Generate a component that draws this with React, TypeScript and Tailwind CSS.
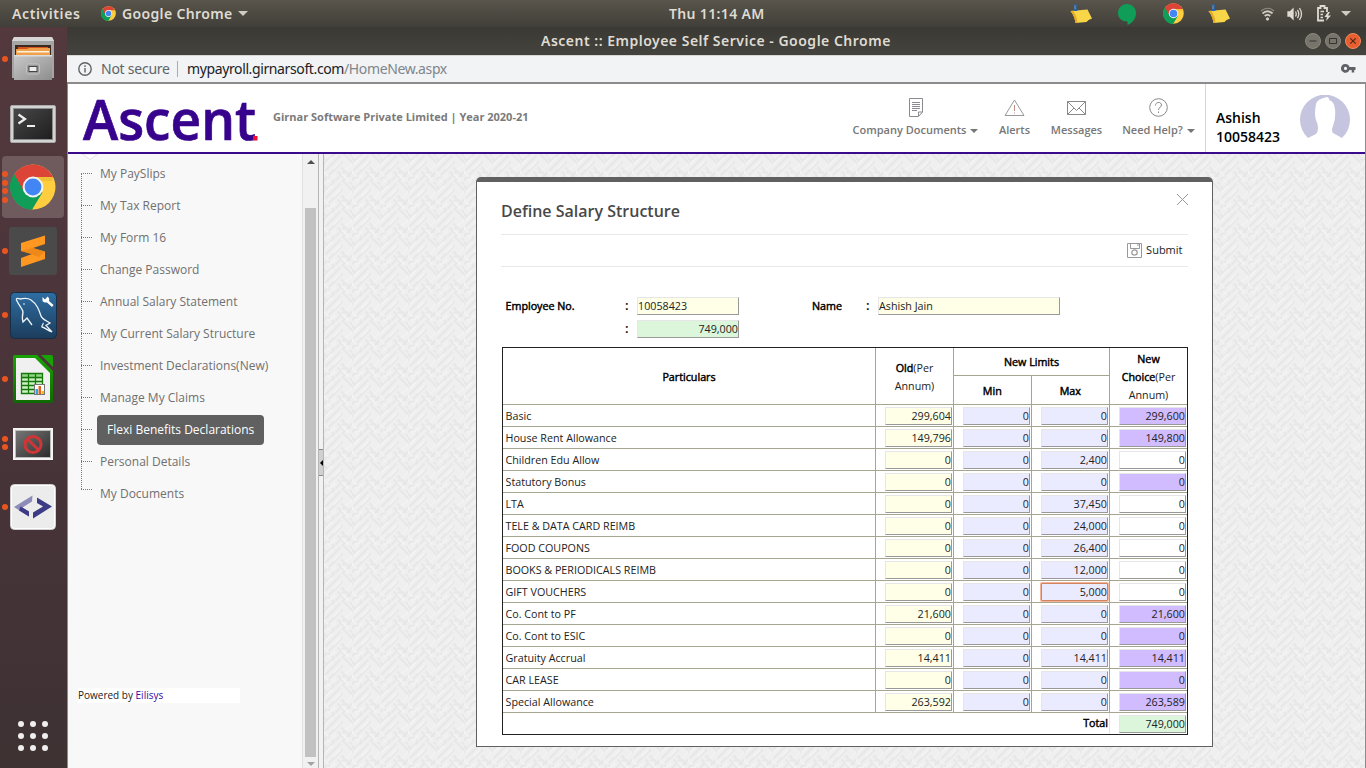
import React from "react";

const rows: [string, string, string, string, boolean][] = [
  ["Basic", "299,604", "0", "299,600", true],
  ["House Rent Allowance", "149,796", "0", "149,800", true],
  ["Children Edu Allow", "0", "2,400", "0", false],
  ["Statutory Bonus", "0", "0", "0", true],
  ["LTA", "0", "37,450", "0", false],
  ["TELE & DATA CARD REIMB", "0", "24,000", "0", false],
  ["FOOD COUPONS", "0", "26,400", "0", false],
  ["BOOKS & PERIODICALS REIMB", "0", "12,000", "0", false],
  ["GIFT VOUCHERS", "0", "5,000", "0", false],
  ["Co. Cont to PF", "21,600", "0", "21,600", true],
  ["Co. Cont to ESIC", "0", "0", "0", true],
  ["Gratuity Accrual", "14,411", "14,411", "14,411", true],
  ["CAR LEASE", "0", "0", "0", true],
  ["Special Allowance", "263,592", "0", "263,589", true],
];

const menu = [
  "My PaySlips",
  "My Tax Report",
  "My Form 16",
  "Change Password",
  "Annual Salary Statement",
  "My Current Salary Structure",
  "Investment Declarations(New)",
  "Manage My Claims",
  "Flexi Benefits Declarations",
  "Personal Details",
  "My Documents",
];

function Chrome({ size }: { size: number }) {
  return (
    <svg width={size} height={size} viewBox="0 0 46 46" className="shrink-0">
      <circle cx="23" cy="23" r="22.5" fill="#ffcd40" />
      <path d="M23 23 L4.2 10.5 A22.5 22.5 0 0 0 22 45.5 L32.5 28.5 Z" fill="#0f9d58" />
      <path d="M4.2 10.5 A22.5 22.5 0 0 1 43 13 L23 13 L13.5 27 Z" fill="#db4437" />
      <path d="M4.2 10.5 L13.4 27 A10.5 10.5 0 0 0 23 33.5 L31 29 L22 45.5 A22.5 22.5 0 0 1 4.2 10.5Z" fill="#0f9d58" />
      <path d="M23 13H43L42 17L30 17Z" fill="#e8b62f" opacity=".6" />
      <circle cx="23" cy="23" r="10.4" fill="#f4f4f4" />
      <circle cx="23" cy="23" r="8.4" fill="#4285f4" />
    </svg>
  );
}

function Note() {
  return (
    <svg width="22" height="20" viewBox="0 0 22 20">
      <path d="M0.500 7L17.500 5.500L22 14.500Q18 15.500 16.500 18L5.500 19Q4.500 12 0.500 7Z" fill="#f9d548" />
      <path d="M0.500 7Q4.500 12 5.500 19L7.500 18.800Q7 12 3 6.800Z" fill="#e5ab22" />
      <path d="M4 0.500H7L6.500 4L7.500 7H3.500L4.500 4Z" fill="#2a63a8" />
      <path d="M5 1.500V5" stroke="#7fb0e0" strokeWidth=".8" />
    </svg>
  );
}

function FilesIcon() {
  return (
    <svg width="44" height="46" viewBox="0 0 44 46">
      <defs>
        <linearGradient id="cab" x1="0" y1="0" x2="1" y2="1">
          <stop offset="0" stopColor="#c9c9c9" />
          <stop offset="1" stopColor="#8d8d8d" />
        </linearGradient>
      </defs>
      <path d="M3 1H41L43 5V42H1V5Z" fill="#a5a5a5" />
      <path d="M3 1H41L43 5H1Z" fill="#d6d6d6" />
      <rect x="4" y="9" width="36" height="12" fill="#3b2a20" />
      <path d="M7 11H37V20H7Z" fill="#d5541e" />
      <path d="M5 13H16L18 12H39V21H5Z" fill="#f0a04a" />
      <path d="M6 15H38V16.500H6Z" fill="#fff3e0" />
      <rect x="3" y="19" width="38" height="25" fill="url(#cab)" />
      <path d="M3 19H41V20.500H3Z" fill="#dcdcdc" />
      <rect x="15.500" y="28" width="13" height="10" rx="2" fill="#9b9b9b" stroke="#c4c4c4" />
      <rect x="18" y="30.500" width="8" height="5" fill="#eee" stroke="#444" />
    </svg>
  );
}

function TerminalIcon() {
  return (
    <svg width="46" height="38" viewBox="0 0 46 38">
      <defs>
        <linearGradient id="term" x1="0" y1="0" x2="1" y2="1">
          <stop offset="0" stopColor="#484848" />
          <stop offset="1" stopColor="#1e1e1e" />
        </linearGradient>
      </defs>
      <rect x=".5" y=".5" width="45" height="37" rx="1.500" fill="#d3d3d3" stroke="#aaa" />
      <rect x="3.500" y="3.500" width="39" height="31" fill="url(#term)" stroke="#8b8b8b" />
      <path d="M8.500 9.500L15 14L8.500 18.500" fill="none" stroke="#eee" strokeWidth="2.200" />
      <path d="M17 21H25" stroke="#eee" strokeWidth="2" />
    </svg>
  );
}

function SublimeIcon() {
  return (
    <svg width="48" height="48" viewBox="0 0 48 48">
      <rect width="48" height="48" rx="3" fill="#4a4a4a" />
      <path d="M12 16L36 8.500V17L24 21L36 24.500V32L12 40V31L23 27L12 24Z" fill="#ff9720" />
      <path d="M36 24.500L24 21L12 24L30 30Z" fill="#e37f14" opacity=".6" />
    </svg>
  );
}

function DolphinIcon() {
  return (
    <svg width="47" height="47" viewBox="0 0 47 47">
      <defs>
        <linearGradient id="sea" x1="0" y1="0" x2="0" y2="1">
          <stop offset="0" stopColor="#2f6da3" />
          <stop offset="1" stopColor="#1c3d5c" />
        </linearGradient>
      </defs>
      <rect x=".5" y=".5" width="46" height="46" rx="4" fill="url(#sea)" stroke="#172e44" />
      <path
        d="M6.500 8C6 6 8 6 10 7C15 6 18 6 21 8C27 12 29 18 31 24C32 27 35 28 40 31L36 33.500L42 40C37 38 34 35 32 35C31 34 34 32 33 31M6.500 8C9 14 13 17 13 20C12 25 12 27 13 30L17 26L22 33"
        fill="none"
        stroke="#eef6fb"
        strokeWidth="1.300"
      />
      <circle cx="14" cy="12" r=".8" fill="#fff" />
      <path d="M32.500 5L35 7.500L37.500 4.500Q40 6.500 39 9L43.500 13L42 15L37 10.500Q34 11 32.500 9Z" fill="#fff" />
    </svg>
  );
}

function CalcIcon() {
  return (
    <svg width="40" height="48" viewBox="0 0 40 48">
      <defs>
        <linearGradient id="lo" x1="0" y1="0" x2="0" y2="1">
          <stop offset="0" stopColor="#18a303" />
          <stop offset="1" stopColor="#106802" />
        </linearGradient>
      </defs>
      <path d="M2 0H24L40 16V46Q40 48 38 48H2Q0 48 0 46V2Q0 0 2 0Z" fill="url(#lo)" />
      <path d="M28 0H38Q40 0 40 2V12Z" fill="#18a303" />
      <path d="M3 3H22L37 18V45H3Z" fill="#f0f0f0" />
      <rect x="8.500" y="18.500" width="21" height="20" fill="#cdf0c4" />
      <rect x="8.500" y="18.500" width="21" height="5" fill="#8fd682" />
      <path d="M8.500 18.500H29.500V38.500H8.500ZM8.500 22.500H29.500M8.500 26.500H29.500M8.500 30.500H29.500M8.500 34.500H29.500M15.500 18V39M22.500 18V39" fill="none" stroke="#16780a" strokeWidth="1.300" />
      <rect x="21.500" y="29.500" width="10" height="10" fill="#fff" stroke="#777" />
      <path d="M22.500 39V34H25V39Z" fill="#3b9fd8" />
      <path d="M25.500 39V31H28V39Z" fill="#e0631e" />
      <path d="M28.500 39V36H31V39Z" fill="#f0bd1a" />
    </svg>
  );
}

function BlockedIcon() {
  return (
    <svg width="40" height="32" viewBox="0 0 40 32">
      <defs>
        <linearGradient id="blk" x1="0" y1="0" x2="1" y2="1">
          <stop offset="0" stopColor="#777" />
          <stop offset="1" stopColor="#2b2b2b" />
        </linearGradient>
      </defs>
      <rect width="40" height="32" fill="#f4f4f4" />
      <rect x="2.500" y="2.500" width="35" height="27" fill="url(#blk)" stroke="#bbb" />
      <circle cx="20" cy="16.500" r="8" fill="none" stroke="#cf3638" strokeWidth="3" />
      <path d="M14.500 11L25.500 22" stroke="#cf3638" strokeWidth="3" />
    </svg>
  );
}

function CodeIcon() {
  return (
    <svg width="46" height="46" viewBox="0 0 46 46">
      <rect x=".5" y=".5" width="45" height="45" rx="4" fill="#fff" stroke="#cfcfcf" />
      <rect x="2" y="2" width="42" height="42" rx="3" fill="#ececec" />
      <path d="M22.500 11.500L4 23L19 32.500V27.500L12.500 23.500L22 17.500Z" fill="#8d8bb8" />
      <path d="M10.500 22.500L19 27.500V32.500L9 26.500Z" fill="#3d3b85" />
      <path d="M27 13.500L42 22.500L23 34.500V28.500L33 22.500L27 19Z" fill="#3d3b85" />
    </svg>
  );
}

const dock: { icon: React.ReactNode; dots: number; active?: boolean }[] = [
  { icon: <FilesIcon />, dots: 1 },
  { icon: <div className="pt-[2px]"><TerminalIcon /></div>, dots: 0 },
  { icon: <Chrome size={46} />, dots: 4, active: true },
  { icon: <SublimeIcon />, dots: 1 },
  { icon: <DolphinIcon />, dots: 1 },
  { icon: <CalcIcon />, dots: 1 },
  { icon: <div className="pt-[2px]"><BlockedIcon /></div>, dots: 2 },
  { icon: <CodeIcon />, dots: 1 },
];

function Dock() {
  return (
    <aside className="flex w-[67px] shrink-0 flex-col bg-linear-to-b from-[#53393d] via-[#49343a] to-[#3e3233]">
      {dock.map((d, i) => (
        <div key={i} className="flex h-[64px] items-center">
          <div className="flex w-[10px] shrink-0 flex-col items-center gap-[2.500px]">
            {Array.from({ length: d.dots }, (_, k) => (
              <span key={k} className="relative z-10 size-[6px] rounded-full bg-[#e95420]" />
            ))}
          </div>
          <div
            className={
              d.active
                ? "-ml-[8px] flex size-[62px] items-center justify-center rounded-[4px] bg-[#6f5a5e]"
                : "-ml-[8px] flex size-[62px] items-center justify-center"
            }
          >
            {d.icon}
          </div>
        </div>
      ))}
      <div className="mt-auto mb-[17px] ml-[18px] grid w-[30px] grid-cols-3 gap-[6px]">
        {Array.from({ length: 9 }, (_, k) => (
          <span key={k} className="size-[6px] rounded-full bg-[#f0eeee]" />
        ))}
      </div>
    </aside>
  );
}

function TopBar() {
  return (
    <header className="grid h-[27px] shrink-0 grid-cols-[669px_1fr] items-center bg-linear-to-b from-[#59554c] to-[#413f39] font-['Noto_Sans'] text-[14px] leading-[27px] font-semibold text-[#dfdbd2]">
      <div className="flex items-center">
        <span className="w-[88px] pl-[12px] tracking-[0.600px]">Activities</span>
        <span className="w-[13px]" />
        <Chrome size={15} />
        <span className="ml-[6px] tracking-[0.350px]">Google Chrome</span>
        <svg width="10" height="5" viewBox="0 0 10 5" className="ml-[6px]"><path d="M0 0H10L5 5Z" fill="#cfccc4" /></svg>
      </div>
      <div className="flex items-center">
        <span className="w-[401px] tracking-[0.350px]">Thu 11:14 AM</span>
        <Note />
        <svg width="20" height="22" viewBox="0 0 20 22" className="ml-[25px]">
          <path d="M10 1C15 1 19 5 19 10C19 16 15 20 10.500 22V18.500C5 18.500 1 15 1 10C1 5 5 1 10 1Z" fill="#0f9d58" />
        </svg>
        <span className="ml-[26px]"><Chrome size={21} /></span>
        <span className="ml-[24px]"><Note /></span>
        <svg width="15" height="14" viewBox="0 0 15 14" className="ml-[30px]" fill="none" stroke="#cfccc4">
          <path d="M1 4Q7.500 -1.500 14 4" strokeWidth="1.200" opacity=".5" />
          <path d="M2.500 6.500Q7.500 2 12.500 6.500M4.700 9Q7.500 6.500 10.300 9" strokeWidth="1.800" />
          <circle cx="7.500" cy="12" r="1.200" fill="#cfccc4" />
        </svg>
        <svg width="16" height="14" viewBox="0 0 16 14" className="ml-[12px]" fill="none" stroke="#dfdbd2" strokeWidth="1.300">
          <path d="M1 5H3L6 2V12L3 9H1Z" fill="#dfdbd2" />
          <path d="M8.500 4.500Q10 7 8.500 9.500M10.500 2.800Q13 7 10.500 11.200M12.500 1Q16.500 7 12.500 13" />
        </svg>
        <svg width="16" height="17" viewBox="0 0 16 17" className="ml-[13px]" fill="none" stroke="#dfdbd2" strokeWidth="1.800">
          <path d="M11 7V3H8.500V1H4.500V3H2V15.500H8" />
          <path d="M4.500 6.500H8M4.500 9.500H7M4.500 12.500H7" strokeWidth="1.300" />
          <path d="M12 7L8.500 12H11L10 16L15 10.500H12L14 7Z" fill="#dfdbd2" stroke="none" />
        </svg>
        <svg width="10" height="5" viewBox="0 0 10 5" className="ml-[9px]"><path d="M0 0H10L5 5Z" fill="#cfccc4" /></svg>
      </div>
    </header>
  );
}

function TitleBar() {
  return (
    <div className="grid h-[28px] shrink-0 grid-cols-[474px_1fr_auto] items-center bg-linear-to-b from-[#3b3934] to-[#45433d] font-['Noto_Sans'] text-[14px] font-semibold text-[#dfdbd2]">
      <span />
      <span className="pb-[2px] tracking-[0.500px] whitespace-nowrap">Ascent :: Employee Self Service - Google Chrome</span>
      <div className="mr-[5px] flex gap-[4px]">
        <svg width="16" height="16"><circle cx="8" cy="8" r="7.500" fill="#77746c" stroke="#8b887f" /><path d="M4.500 8H11.500" stroke="#35332f" /></svg>
        <svg width="16" height="16"><circle cx="8" cy="8" r="7.500" fill="#77746c" stroke="#8b887f" /><path d="M4.500 5.500H11.500V10.500H4.500Z" fill="none" stroke="#35332f" /></svg>
        <svg width="16" height="16"><circle cx="8" cy="8" r="7.500" fill="#e85e2f" stroke="#f08a5e" /><path d="M5.300 5.300L10.700 10.700M10.700 5.300L5.300 10.700" stroke="#4a2a1c" strokeWidth="1.200" /></svg>
      </div>
    </div>
  );
}

function UrlBar() {
  return (
    <div className="flex h-[29px] shrink-0 items-center border-t border-b-2 border-t-[#d9d8d6] border-b-[#8c8c8c] bg-[#f1f3f4] pb-px font-['Noto_Sans'] text-[14px] text-[#5f6368]">
      <svg width="14" height="14" viewBox="0 0 14 14" className="ml-[11px]" fill="none" stroke="#5f6368" strokeWidth="1.400">
        <circle cx="7" cy="7" r="6.200" /><path d="M7 6V10.500M7 3.300V5" />
      </svg>
      <span className="ml-[9px] w-[76px] tracking-[-0.250px]">Not secure</span>
      <span className="mr-[9px] h-[16px] w-px bg-[#a8abb0]" />
      <span className="tracking-[-0.380px] text-[#202124]">mypayroll.girnarsoft.com<span className="text-[#80868b]">/HomeNew.aspx</span></span>
      <svg width="15" height="9" viewBox="0 0 15 9" className="mr-[10px] ml-auto" fill="#5f6368">
        <path fillRule="evenodd" d="M4.500 0A4.400 4.400 0 0 1 8.500 3H14.500V6H13.200V8.500H10.700V6H8.500A4.400 4.400 0 1 1 4.500 0ZM4.500 2.800A1.600 1.600 0 1 0 4.500 6A1.600 1.600 0 1 0 4.500 2.800Z" />
      </svg>
    </div>
  );
}

const navText = "text-[11px] leading-[16px] font-semibold text-[#777777] whitespace-nowrap";

function Caret() {
  return <svg width="8" height="4" viewBox="0 0 8 4" className="ml-[4px] inline-block align-middle"><path d="M0 0H8L4 4Z" fill="#777" /></svg>;
}

function AppHeader() {
  return (
    <div className="flex h-[70px] shrink-0 border-b-2 border-[#3a0a8c] bg-white">
      <svg width="178" height="66" viewBox="0 0 178 66" className="ml-[14px] shrink-0 overflow-visible">
        <text x="1" y="56" fontFamily="Open Sans" fontWeight="600" fontSize="56" fill="#38038c" stroke="#38038c" strokeWidth=".7" textLength="173" lengthAdjust="spacingAndGlyphs">Ascent</text>
        <rect x="171" y="52" width="4.500" height="4.500" fill="#ee1133" />
      </svg>
      <div className="ml-[13px] pt-[25px] text-[11px] leading-[16px] font-bold whitespace-nowrap text-[#7a7a7a]">Girnar Software Private Limited | Year 2020-21</div>
      <div className="ml-auto flex items-start pt-[14px]">
        <div className="mr-[21px] flex w-[125px] flex-col items-center">
          <svg width="16" height="19" viewBox="0 0 16 19" fill="none" stroke="#8a8a90"><path d="M1.500 .5H14.500V14L10.500 18.500H1.500ZM10.500 18V14H14.500M4 4.500H12M4 6.500H12M4 8.500H12M4 10.500H12M4 12.500H9" /></svg>
          <span className={navText + " mt-[5px]"}>Company Documents<Caret /></span>
        </div>
        <div className="mr-[21px] flex w-[31px] flex-col items-center">
          <svg width="21" height="19" viewBox="0 0 21 19" fill="none" stroke="#999"><path d="M10.500 2L20 17.500H1Z" /><path d="M10.500 7V13M10.500 14.500V15.500" stroke="#c08a80" /></svg>
          <span className={navText + " mt-[5px]"}>Alerts</span>
        </div>
        <div className="mr-[20px] flex w-[51px] flex-col items-center">
          <svg width="19" height="19" viewBox="0 0 19 19" fill="none" stroke="#888"><path d="M.5 3.500H18.500V16.500H.5ZM.5 3.500L9.500 12.500L18.500 3.500M.5 16.500L7 10M18.500 16.500L12 10" /></svg>
          <span className={navText + " mt-[5px]"}>Messages</span>
        </div>
        <div className="mr-[10px] flex w-[73px] flex-col items-center">
          <svg width="19" height="19" viewBox="0 0 19 19" fill="none" stroke="#888"><circle cx="9.500" cy="9.500" r="8.800" /><path d="M6.500 7.500C6.500 3.500 12.500 3.500 12.500 7C12.500 9.500 9.500 9 9.500 12M9.500 13.500V15" /></svg>
          <span className={navText + " mt-[5px]"}>Need Help?<Caret /></span>
        </div>
      </div>
      <div className="flex w-[160px] shrink-0 border-l border-[#d6d6d6] pl-[10px]">
        <div className="w-[84px] pt-[24px] text-[14px] leading-[19px] font-semibold text-black">
          <div>Ashish</div>
          <div>10058423</div>
        </div>
        <svg width="50" height="44" viewBox="0 0 50 44" className="mt-[11px]">
          <path d="M8 43A25 25 0 1 1 42 43L33 38Q31 35 33 31Q36 24 35 14Q34 6 29 5Q30 3 27 2Q17 4 16 9Q14 20 16 25Q18 29 18 33Q18 37 16 39Z" fill="#c5c5df" />
        </svg>
      </div>
    </div>
  );
}

function Sidebar() {
  return (
    <div className="flex w-[256px] shrink-0 bg-[#f8f8f8]">
      <div className="flex w-[234px] flex-col">
        <svg width="16" height="6" viewBox="0 0 16 6" className="ml-[14px]"><path d="M0 0L8 5.500L16 0Z" fill="#fff" stroke="#e2e2e2" /></svg>
        <ul className="-mt-[2px]">
          {menu.map((m, i) => (
            <li key={m} className="flex h-[32px] items-start">
              <div className="mt-[15px] ml-[13px] flex h-[32px] w-[12px] shrink-0">
                <div
                  className={
                    i === 10
                      ? "-mt-[4px] h-px w-[11px] border-t border-dotted border-[#777]"
                      : i === 9
                        ? "h-[28px] w-[11px] border-t border-l border-dotted border-[#777]"
                        : "h-[32px] w-[11px] border-t border-l border-dotted border-[#777]"
                  }
                />
              </div>
              {i === 8 ? (
                <span className="mt-[1px] ml-[4px] h-[30px] w-[167px] shrink-0 rounded-[4px] bg-[#606060] pl-[10px] text-[12px] leading-[30px] whitespace-nowrap text-white">{m}</span>
              ) : (
                <span className="ml-[7px] text-[12px] leading-[32px] whitespace-nowrap text-[#707070]">{m}</span>
              )}
            </li>
          ))}
        </ul>
        <div className="mt-auto mb-[65px] ml-[10px] h-[15px] w-[162px] bg-white text-[10px] leading-[15px] text-[#222]">
          Powered by <span className="text-[#3a0a9c]">Eilisys</span>
        </div>
      </div>
      <div className="flex w-[16px] flex-col items-center border-l border-[#e0e0e0] bg-[#f1f1f1]">
        <svg width="8" height="4" viewBox="0 0 8 4" className="mt-[6px] shrink-0"><path d="M0 4H8L4 0Z" fill="#505050" /></svg>
        <div className="mt-[44px] w-[11px] flex-1 bg-[#c1c1c1]" />
        <svg width="8" height="4" viewBox="0 0 8 4" className="mt-[5px] mb-[2px] shrink-0"><path d="M0 0H8L4 4Z" fill="#a3a3a3" /></svg>
      </div>
      <div className="flex w-[6px] flex-col border-x border-[#b5b5b5] bg-[#f2f2f2]">
        <div className="mt-[295px] flex h-[27px] items-center justify-end border-y border-[#888] bg-[#d0d0d0]">
          <svg width="3" height="6" viewBox="0 0 3 6"><path d="M3 0V6L0 3Z" fill="#000" /></svg>
        </div>
      </div>
    </div>
  );
}

const fieldBase = "h-[18px] border border-t-[#e6e6e6] border-l-[#e6e6e6] border-r-[#999] border-b-[#999] leading-[16px] text-[#222]";

function Field({ value, tone, focus }: { value: string; tone: string; focus?: boolean }) {
  return (
    <div className="pt-[2px] pl-[9px]">
      <div
        className={
          focus
            ? "h-[18px] w-[67px] rounded-[1px] border border-[#cf8360] text-right leading-[16px] text-[#222] shadow-[0_0_0_1px_#f5b597] " + tone
            : fieldBase + " w-[67px] text-right " + tone
        }
      >
        {value}
      </div>
    </div>
  );
}

const line = "border-[#a5a590]";
const faux = "text-black [-webkit-text-stroke:0.450px_black]";

function SalaryTable() {
  return (
    <div className="ml-[1px] w-[686px] border border-[#222] text-[10.720px]">
      <div className={"grid h-[57px] grid-cols-[373px_78px_156px_77px] border-b " + line}>
        <div className={"flex items-center justify-center border-r pt-[2px] " + line + " " + faux}>Particulars</div>
        <div className={"flex items-center justify-center border-r pt-[2px] text-center leading-[18px] text-[#222] " + line}>
          <div><span className={faux}>Old</span>(Per<br />Annum)</div>
        </div>
        <div className={"grid grid-cols-2 grid-rows-[28px_28px] border-r text-center leading-[28px] " + line + " " + faux}>
          <div className={"col-span-2 border-b " + line}>New Limits</div>
          <div className={"border-r leading-[30px] " + line}>Min</div>
          <div className="leading-[30px]">Max</div>
        </div>
        <div className="flex items-center justify-center pt-[2px] text-center leading-[18px] text-[#222]">
          <div><span className={faux}>New<br />Choice</span>(Per<br />Annum)</div>
        </div>
      </div>
      {rows.map(([name, old, max, choice, locked], i) => (
        <div key={name} className={"grid h-[22px] grid-cols-[373px_78px_78px_78px_77px] border-b " + line}>
          <div className={"border-r pl-[2.500px] leading-[22px] text-[#222] " + line}>{name}</div>
          <div className={"border-r " + line}><Field value={old} tone="bg-[#feffe6]" /></div>
          <div className={"border-r " + line}><Field value="0" tone="bg-[#ebebff]" /></div>
          <div className={"border-r " + line}><Field value={max} tone="bg-[#ebebff]" focus={i === 8} /></div>
          <Field value={choice} tone={locked ? "bg-[#d0bcff]" : "bg-white"} />
        </div>
      ))}
      <div className="grid h-[21px] grid-cols-[607px_77px]">
        <div className={"border-r border-[#e6e6e6] pr-px text-right leading-[20px] " + faux}>Total</div>
        <Field value="749,000" tone="bg-[#dbf6da]" />
      </div>
    </div>
  );
}

function Card() {
  return (
    <section className="mt-[23px] ml-[152px] h-[570px] w-[737px] rounded-t-[5px] border border-t-[5px] border-[#606060] bg-white px-[24px]">
      <div className="flex h-[53px] justify-between border-b border-[#e8e8e8]">
        <h1 className="pt-[17px] text-[16px] leading-[24px] font-semibold text-[#484848]">Define Salary Structure</h1>
        <svg width="13" height="13" viewBox="0 0 13 13" className="mt-[11px] -mr-px"><path d="M1 1L12 12M12 1L1 12" stroke="#999" /></svg>
      </div>
      <div className="flex h-[32px] items-center justify-end border-b border-[#e8e8e8] pr-[5.500px] text-[11px] text-[#222]">
        <svg width="15" height="15" viewBox="0 0 15 15" className="mr-[4px]" fill="none" stroke="#999"><path d="M.5 .5H14.500V14.500H.5ZM3.500 .5V5.500H12.500V.5M11 1V3" /><circle cx="7.500" cy="9.500" r="2.700" strokeWidth="1.200" /></svg>
        Submit
      </div>
      <div className="mt-[30px] flex h-[18px] items-center pl-[4px] text-[10.720px]">
        <span className={"w-[120px] pl-[0.500px] " + faux}>Employee No.</span>
        <span className="w-[12px] text-[13px] font-semibold text-black">:</span>
        <span className={fieldBase + " w-[102px] bg-[#feffe6]"}>10058423</span>
        <span className={"ml-[73px] w-[54px] " + faux}>Name</span>
        <span className="w-[12px] text-[13px] font-semibold text-black">:</span>
        <span className={fieldBase + " w-[182px] bg-[#feffe6]"}>Ashish Jain</span>
      </div>
      <div className="mt-[5px] mb-[9px] flex h-[18px] items-center pl-[124px] text-[10.720px]">
        <span className="w-[12px] text-[13px] font-semibold text-black">:</span>
        <span className={fieldBase + " w-[102px] bg-[#dbf6da] text-right"}>749,000</span>
      </div>
      <SalaryTable />
    </section>
  );
}

function Weave() {
  return (
    <svg className="absolute inset-0 h-full w-full">
      <defs>
        <pattern id="weave" width="28" height="28" patternUnits="userSpaceOnUse">
          <rect width="28" height="28" fill="#efefef" />
          <path
            d="M-2 12L12 -2M2 16L16 2M6 20L18 8M0 26L6 20M12 26L26 12M16 30L30 16M-2 2L4 8M14 18L20 24M18 14L26 22M22 2L30 10M24 -2L30 4M2 20L12 30M20 0L26 6"
            fill="none"
            stroke="#e7e7e7"
            strokeWidth="2"
            strokeLinecap="round"
          />
          <path d="M0 18L4 22M8 4L2 10M18 20L24 26M22 16L28 10M10 14L16 8M4 28L10 22" fill="none" stroke="#f3f3f3" strokeWidth="2" strokeLinecap="round" />
        </pattern>
      </defs>
      <rect width="100%" height="100%" fill="url(#weave)" />
    </svg>
  );
}

export default function App() {
  return (
    <div className="flex h-[768px] w-[1366px] flex-col overflow-hidden font-['Open_Sans',sans-serif]">
      <TopBar />
      <div className="flex min-h-0 flex-1">
        <Dock />
        <div className="flex min-w-0 flex-1 flex-col">
          <TitleBar />
          <UrlBar />
          <div className="flex min-h-0 flex-1 flex-col border-x border-[#8c8c8c]">
            <AppHeader />
            <div className="flex min-h-0 flex-1">
              <Sidebar />
              <main className="relative flex-1 overflow-hidden">
                <Weave />
                <div className="relative"><Card /></div>
              </main>
            </div>
          </div>
        </div>
      </div>
    </div>
  );
}
